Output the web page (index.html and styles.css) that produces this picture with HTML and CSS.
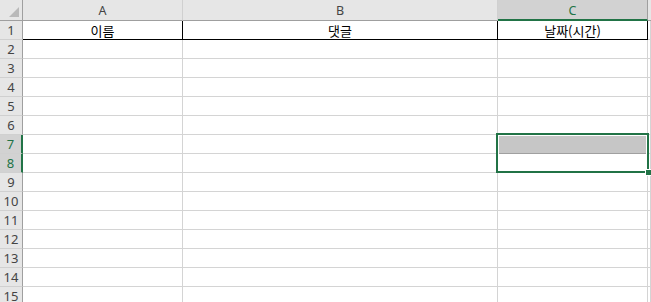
FILE: index.html
```
<!DOCTYPE html>
<html lang="ko">
<head>
    <meta charset="UTF-8">
    <title>Sheet1</title>
    <link rel="stylesheet" href="styles.css">
</head>
<body>
    <div class="sheet">
        <div class="grid">
            <div class="corner"><span class="corner-tri"></span></div>
            <div class="col-head">A</div>
            <div class="col-head">B</div>
            <div class="col-head active">C</div>
            <div class="col-head last"></div>

            <div class="row-head">1</div>
            <div class="cell title">이름</div>
            <div class="cell title">댓글</div>
            <div class="cell title">날짜(시간)</div>
            <div class="cell"></div>

            <div class="row-head">2</div><div class="cell"></div><div class="cell"></div><div class="cell"></div><div class="cell"></div>
            <div class="row-head">3</div><div class="cell"></div><div class="cell"></div><div class="cell"></div><div class="cell"></div>
            <div class="row-head">4</div><div class="cell"></div><div class="cell"></div><div class="cell"></div><div class="cell"></div>
            <div class="row-head">5</div><div class="cell"></div><div class="cell"></div><div class="cell"></div><div class="cell"></div>
            <div class="row-head">6</div><div class="cell"></div><div class="cell"></div><div class="cell"></div><div class="cell"></div>
            <div class="row-head active">7</div><div class="cell"></div><div class="cell"></div><div class="cell shaded"></div><div class="cell"></div>
            <div class="row-head active">8</div><div class="cell"></div><div class="cell"></div><div class="cell"></div><div class="cell"></div>
            <div class="row-head">9</div><div class="cell"></div><div class="cell"></div><div class="cell"></div><div class="cell"></div>
            <div class="row-head">10</div><div class="cell"></div><div class="cell"></div><div class="cell"></div><div class="cell"></div>
            <div class="row-head">11</div><div class="cell"></div><div class="cell"></div><div class="cell"></div><div class="cell"></div>
            <div class="row-head">12</div><div class="cell"></div><div class="cell"></div><div class="cell"></div><div class="cell"></div>
            <div class="row-head">13</div><div class="cell"></div><div class="cell"></div><div class="cell"></div><div class="cell"></div>
            <div class="row-head">14</div><div class="cell"></div><div class="cell"></div><div class="cell"></div><div class="cell"></div>
            <div class="row-head">15</div><div class="cell"></div><div class="cell"></div><div class="cell"></div><div class="cell"></div>
        </div>

        <!-- selected range C7:C8 -->
        <div class="selection"><span class="fill-handle"></span></div>
    </div>
</body>
</html>
```

FILE: styles.css
```
body {
    margin: 0;
    background-color: #ffffff;
    font-family: "Noto Sans", "Noto Sans CJK KR", sans-serif;
    overflow: hidden;
}

.sheet {
    position: relative;
    width: 651px;
    height: 302px;
    overflow: hidden;
}

.grid {
    display: grid;
    grid-template-columns: 23px 160px 315px 150px 1fr;
    grid-template-rows: 21px;
    grid-auto-rows: 19px;
}

.grid > div {
    box-sizing: border-box;
}

.corner {
    position: relative;
    background-color: #e6e6e6;
    border-right: 1px solid #9f9f9f;
    border-bottom: 1px solid #9f9f9f;
}

.corner-tri {
    position: absolute;
    right: 3px;
    bottom: 3px;
    width: 0;
    height: 0;
    border-left: 10px solid transparent;
    border-bottom: 10px solid #b9b9b9;
}

.col-head {
    display: flex;
    align-items: center;
    justify-content: center;
    background-color: #e6e6e6;
    border-right: 1px solid #d0d0d0;
    border-bottom: 1px solid #9f9f9f;
    font-size: 12.5px;
    color: #444444;
    padding-top: 1px;
}

.col-head.active {
    background-color: #d2d2d2;
    color: #217346;
    border-right-color: #9f9f9f;
    border-bottom: 2px solid #217346;
}

.col-head.last {
    border-right: none;
}

.row-head {
    display: flex;
    align-items: center;
    justify-content: center;
    background-color: #e6e6e6;
    border-right: 1px solid #9f9f9f;
    border-bottom: 1px solid #d0d0d0;
    font-size: 13px;
    color: #444444;
}

.row-head.active {
    background-color: #d2d2d2;
    color: #217346;
    border-right: 2px solid #217346;
}

.cell {
    border-right: 1px solid #d4d4d4;
    border-bottom: 1px solid #d4d4d4;
}

.cell.title {
    display: flex;
    align-items: center;
    justify-content: center;
    border-right-color: #000000;
    border-bottom-color: #000000;
    font-family: "Noto Sans CJK KR", sans-serif;
    font-size: 13px;
    color: #000000;
}

.cell.shaded {
    background-color: #c6c6c6;
    border-bottom-color: #a0a0a0;
}

.selection {
    position: absolute;
    left: 496px;
    top: 133px;
    width: 153px;
    height: 40px;
    box-sizing: border-box;
    border: 2px solid #217346;
    box-shadow: inset 0 0 0 1px #ffffff;
}

.fill-handle {
    position: absolute;
    right: -5px;
    bottom: -5px;
    width: 5px;
    height: 5px;
    background-color: #217346;
    border: 1px solid #ffffff;
}
```
